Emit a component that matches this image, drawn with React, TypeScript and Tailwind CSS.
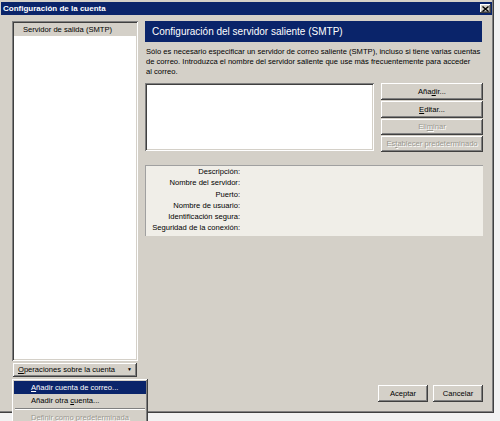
import { ReactNode } from "react";

const raised =
  "shadow-[inset_-1px_-1px_#404040,inset_1px_1px_#ffffff,inset_-2px_-2px_#808080,inset_2px_2px_#d4d0c8]";
const sunken =
  "shadow-[inset_1px_1px_#808080,inset_-1px_-1px_#ffffff,inset_2px_2px_#404040,inset_-2px_-2px_#d4d0c8]";

function Btn({
  children,
  disabled,
  className = "",
}: {
  children: ReactNode;
  disabled?: boolean;
  className?: string;
}) {
  return (
    <div
      className={`flex items-center justify-center whitespace-nowrap bg-[#d4d0c8] ${raised} ${
        disabled ? "text-[#9a9890] [text-shadow:1px_1px_0_#ffffff]" : "text-black"
      } ${className}`}
    >
      {children}
    </div>
  );
}

const labels = [
  "Descripción:",
  "Nombre del servidor:",
  "Puerto:",
  "Nombre de usuario:",
  "Identificación segura:",
  "Seguridad de la conexión:",
];

export default function App() {
  return (
    <div className="relative w-[500px] h-[421px] overflow-hidden bg-[#f2f2f2] font-['Liberation_Sans',Arial,sans-serif] text-[7.6px] text-black">
      {/* Window */}
      <div className="w-[494px] h-[413px] flex flex-col bg-[#d4d0c8] pl-[1px] pt-[2px] pr-[2px] shadow-[inset_-1px_-1px_#404040,inset_-2px_-2px_#808080]">
        {/* Title bar */}
        <div className="h-[13px] flex items-center justify-between bg-[#0a246a] pl-[2px] pr-[1px]">
          <span className="text-white font-bold text-[8px] leading-none">Configuración de la cuenta</span>
          <div className={`w-[11px] h-[9px] flex items-center justify-center bg-[#d4d0c8] ${raised}`}>
            <svg width="7" height="6" viewBox="0 0 7 6">
              <path d="M0.5 0.5 L6.5 5.5 M6.5 0.5 L0.5 5.5" stroke="#000" strokeWidth="1.4" />
            </svg>
          </div>
        </div>

        {/* Body */}
        <div className="flex-1 flex pl-[11px] pr-[9px] pt-[6px] pb-[11px] gap-[7px]">
          {/* Left column */}
          <div className="w-[126px] shrink-0 flex flex-col">
            <div className={`h-[340px] bg-white p-[2px] ${sunken}`}>
              <div className="h-[13px] bg-[#d4d0c8] pl-[9px] flex items-center">Servidor de salida (SMTP)</div>
            </div>
            <Btn className="mt-[2px] mx-[1px] h-[14px] gap-[12px]">
              <span>
                <span className="underline">O</span>peraciones sobre la cuenta
              </span>
              <span className="text-[5px]">▼</span>
            </Btn>
          </div>

          {/* Right column */}
          <div className="flex-1 min-w-0 flex flex-col">
            <div className="h-[21px] bg-[#0a246a] text-white text-[10px] flex items-center pl-[7px] mr-[1px] whitespace-nowrap">
              Configuración del servidor saliente (SMTP)
            </div>
            <p className="mt-[5px] leading-[10px] whitespace-nowrap pl-[1px]">
              Sólo es necesario especificar un servidor de correo saliente (SMTP), incluso si tiene varias cuentas
              <br />
              de correo. Introduzca el nombre del servidor saliente que use más frecuentemente para acceder
              <br />
              al correo.
            </p>
            <div className="mt-[6px] flex gap-[7px]">
              <div className={`w-[229px] shrink-0 h-[68px] bg-white ${sunken}`} />
              <div className="flex-1 flex flex-col gap-[1px]">
                <Btn className="h-[17px]">
                  <span>
                    Aña<span className="underline">d</span>ir...
                  </span>
                </Btn>
                <Btn className="h-[17px]">
                  <span>
                    <span className="underline">E</span>ditar...
                  </span>
                </Btn>
                <Btn disabled className="h-[16px]">
                  <span>
                    Eli<span className="underline">m</span>inar
                  </span>
                </Btn>
                <Btn disabled className="h-[16px]">
                  <span>
                    Es<span className="underline">t</span>ablecer predeterminado
                  </span>
                </Btn>
              </div>
            </div>
            <div className="mt-[13px] h-[71px] bg-[#f0eee8] pt-[1px] shadow-[inset_1px_1px_#a0a0a0]">
              {labels.map((l) => (
                <div key={l} className="w-[95px] text-right leading-[11.3px] whitespace-nowrap">
                  {l}
                </div>
              ))}
            </div>
            <div className="flex-1" />
            <div className="flex justify-end gap-[5px]">
              <Btn className="w-[50px] h-[17px]">Aceptar</Btn>
              <Btn className="w-[50px] h-[17px]">Cancelar</Btn>
            </div>
          </div>
        </div>
      </div>

      {/* Popup menu */}
      <div className={`absolute left-[12px] top-[379px] w-[136px] h-[50px] bg-[#d4d0c8] p-[2px] ${raised}`}>
        <div className="h-[13px] bg-[#0a246a] text-white flex items-center pl-[17px]">
          <span>
            <span className="underline">A</span>ñadir cuenta de correo...
          </span>
        </div>
        <div className="h-[13px] flex items-center pl-[17px]">
          <span>
            Añadir otra <span className="underline">c</span>uenta...
          </span>
        </div>
        <div className="mx-[1px] my-[1px] h-[2px] border-t border-[#808080] border-b border-b-white" />
        <div className="h-[13px] flex items-center pl-[17px] text-[#9a9890] [text-shadow:1px_1px_0_#ffffff]">
          Definir como predeterminada
        </div>
      </div>
    </div>
  );
}
